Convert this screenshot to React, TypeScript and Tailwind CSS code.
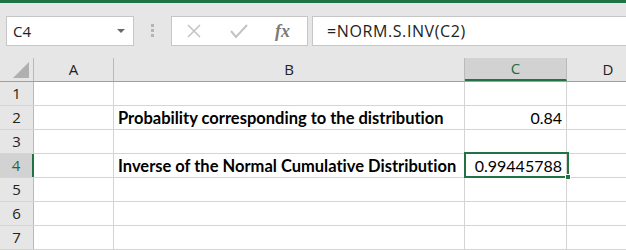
import React from "react";

const rows = [1, 2, 3, 4, 5, 6, 7];

function Toolbar() {
  return (
    <div className="flex h-[55px] items-start bg-[#e6e6e6] pt-[13px]">
      <div className="ml-[6px] flex h-[30px] w-[128px] shrink-0 items-center justify-between border border-[#c6c6c6] bg-white pl-[6px] pr-[8px]">
        <span className="text-[15px] text-[#222]">C4</span>
        <svg width="8" height="5" viewBox="0 0 8 5">
          <path d="M0 0 L8 0 L4 4 Z" fill="#6b6b6b" />
        </svg>
      </div>
      <div className="ml-[17px] mt-[8px] flex w-[3px] shrink-0 flex-col gap-[2px]">
        <div className="h-[3px] w-[3px] bg-[#b4b4b4]" />
        <div className="h-[3px] w-[3px] bg-[#b4b4b4]" />
        <div className="h-[3px] w-[3px] bg-[#b4b4b4]" />
      </div>
      <div className="ml-[17px] flex h-[30px] w-[137px] shrink-0 items-center border border-[#c6c6c6] bg-white">
        <svg className="ml-[14px]" width="16" height="16" viewBox="0 0 16 16">
          <path d="M2 2 L14 14 M14 2 L2 14" stroke="#c2c2c2" strokeWidth="1.5" />
        </svg>
        <svg className="ml-[28px]" width="18" height="16" viewBox="0 0 18 16">
          <path d="M1 8 L6 14 L17 2" stroke="#c2c2c2" strokeWidth="2" fill="none" />
        </svg>
        <span className="ml-[27px] font-['Liberation_Serif'] text-[18px] font-bold italic text-[#7a7a7a]">fx</span>
      </div>
      <div className="ml-[4px] flex h-[30px] flex-1 items-center border border-r-0 border-[#c6c6c6] bg-white pl-[14px]">
        <span className="whitespace-nowrap text-[16px] tracking-[0.6px] text-[#222]">=NORM.S.INV(C2)</span>
      </div>
    </div>
  );
}

function Sheet() {
  return (
    <div className="relative">
      <div className="flex h-[24px] border-b border-[#9f9f9f] bg-[#e6e6e6] text-[15px] text-[#222]">
        <div className="flex w-[34px] shrink-0 items-end justify-end border-r border-[#bababa] pb-[3px] pr-[4px]">
          <svg width="16" height="16" viewBox="0 0 16 16">
            <path d="M16 0 L16 16 L0 16 Z" fill="#b0b0b0" />
          </svg>
        </div>
        <div className="flex w-[80px] shrink-0 items-center justify-center border-r border-[#bababa]">A</div>
        <div className="flex w-[351px] shrink-0 items-center justify-center border-r border-[#bababa]">B</div>
        <div className="flex w-[102px] shrink-0 items-center justify-center border-r border-b-2 border-[#bababa] border-b-[#217346] bg-[#d2d2d2] text-[#1e6b41]">C</div>
        <div className="flex w-[82px] shrink-0 items-center justify-center">D</div>
      </div>
      {rows.map((r) => (
        <div key={r} className="flex h-[24px] border-b border-[#d4d4d4] bg-white text-[15px]">
          <div
            className={
              r === 4
                ? "flex w-[34px] shrink-0 items-center justify-center border-r-2 border-[#217346] bg-[#d2d2d2] text-[#1e6b41]"
                : "flex w-[34px] shrink-0 items-center justify-center border-r border-[#bababa] bg-[#e6e6e6] text-[#222]"
            }
          >
            {r}
          </div>
          <div className="w-[80px] shrink-0 border-r border-[#d4d4d4]" />
          <div className="flex w-[351px] shrink-0 items-end whitespace-nowrap border-r border-[#d4d4d4] pl-[4px] font-['Lato'] text-[16.5px] leading-[22px] font-bold text-black [font-variant-ligatures:none]">
            {r === 2 && "Probability corresponding to the distribution"}
            {r === 4 && "Inverse of the Normal Cumulative Distribution"}
          </div>
          <div className="flex w-[102px] shrink-0 items-end justify-end whitespace-nowrap border-r border-[#d4d4d4] pr-[4px] font-['Lato'] text-[16px] leading-[22px] text-black">
            {r === 2 && "0.84"}
            {r === 4 && "0.99445788"}
          </div>
          <div className="w-[82px] shrink-0" />
        </div>
      ))}
      <div className="absolute left-[464px] top-[94px] h-[26px] w-[105px] border-2 border-[#217346]">
        <div className="absolute -bottom-[4px] -right-[4px] h-[6px] w-[6px] border border-white bg-[#217346]" />
      </div>
    </div>
  );
}

export default function App() {
  return (
    <div className="h-[250px] w-[626px] overflow-hidden bg-[#e6e6e6] font-['Open_Sans',sans-serif]">
      <div className="h-[3px] bg-[#217346]" />
      <Toolbar />
      <Sheet />
    </div>
  );
}
